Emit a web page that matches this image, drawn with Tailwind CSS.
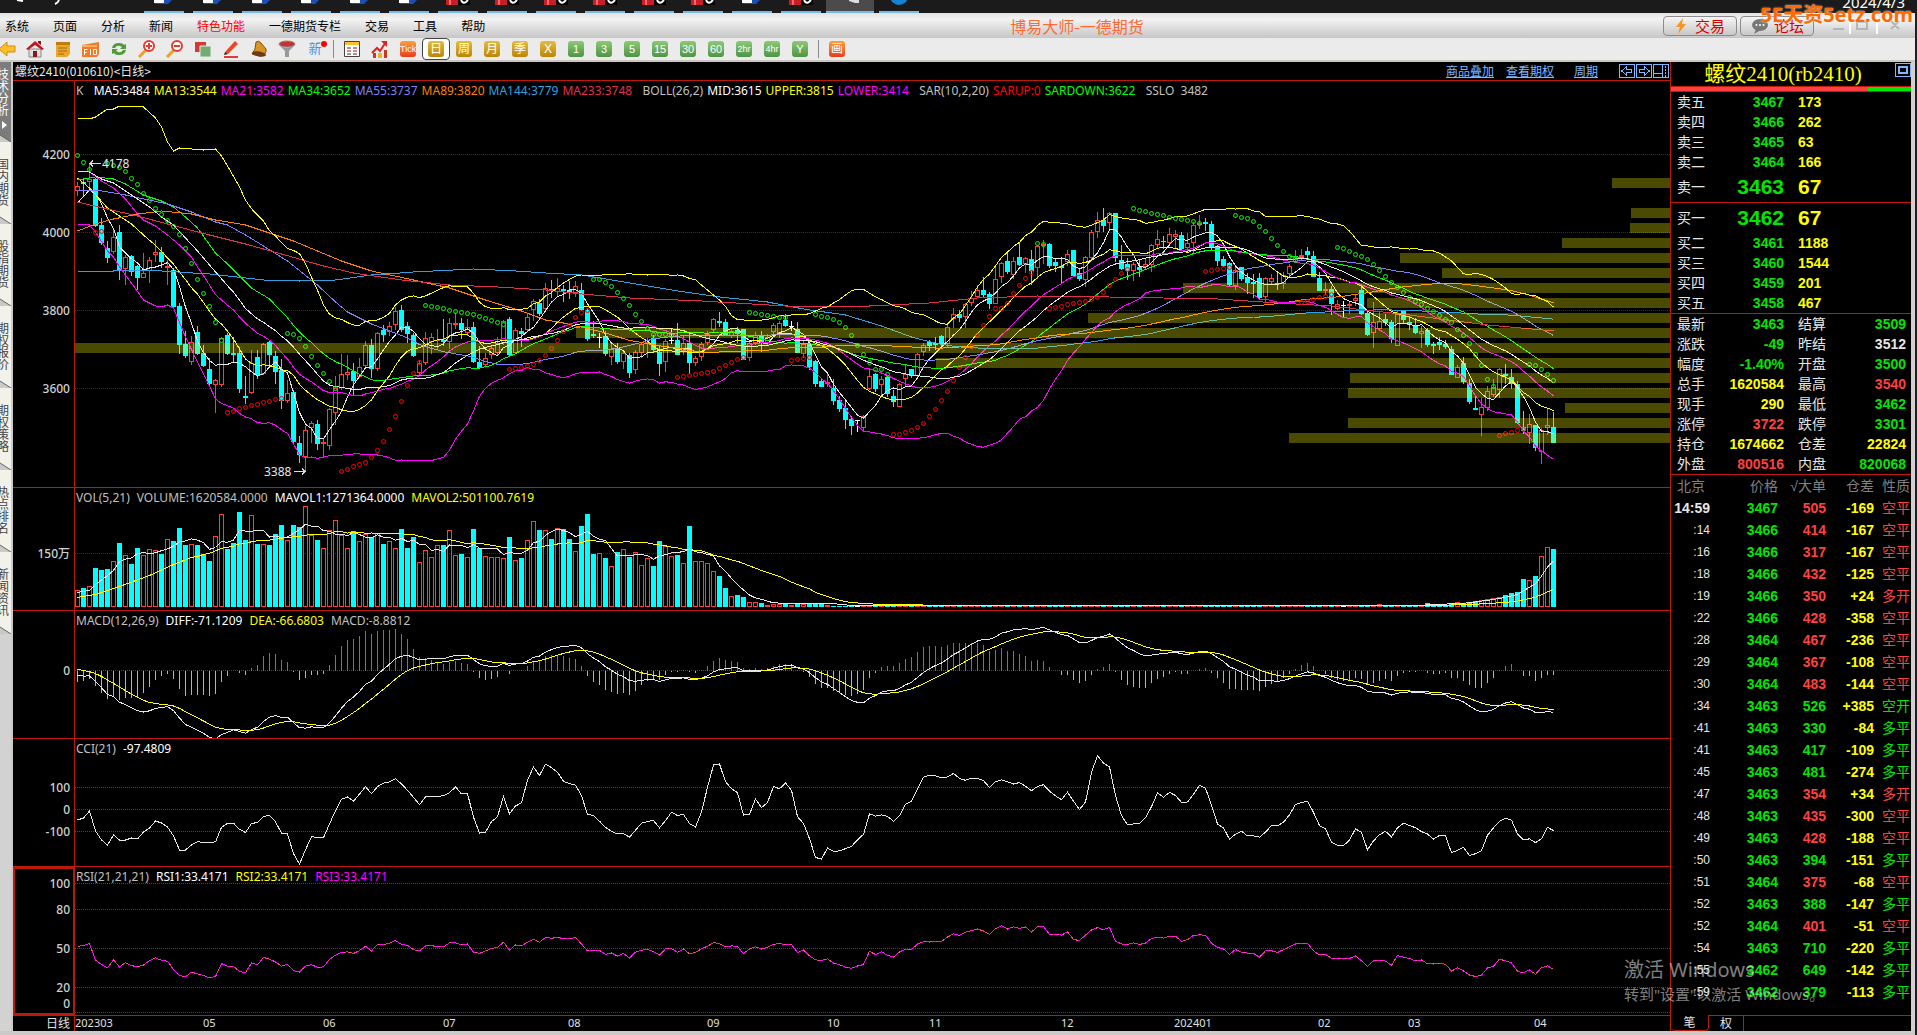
<!DOCTYPE html>
<html lang="zh-CN">
<head>
  <meta charset="UTF-8">
  <meta name="viewport" content="width=device-width, initial-scale=1.0">
  <title>博易大师-一德期货</title>
  <script src="https://cdn.jsdelivr.net/npm/@tailwindcss/browser@4"></script>
</head>
<body class="bg-black font-['Noto_Sans','Noto_Sans_CJK_SC',sans-serif] text-xs">
  <div class="relative flex min-h-screen flex-col overflow-hidden bg-[#cccac8]">

    <!-- system taskbar -->
    <div class="relative flex h-[13px] shrink-0 overflow-hidden bg-[#1b1b1b]">
      <svg class="h-[13px] w-[144px] shrink-0" fill="none" stroke="#fff" stroke-width="2"><path d="M17 0l6 1M59 0q-1 3-4 4"/></svg>
      <div id="tasks" class="flex gap-[9px]"></div>
      <div class="ml-[5px] h-[13px] w-12 border-b-2 border-[#76b9ed] bg-[#4b4b4b]"><svg class="h-3 w-12"><path d="M23 0h10v3h-4l-6-2z" fill="#ddd"/></svg></div>
      <div class="ml-[5px] h-[13px] w-10 border-b-2 border-[#76b9ed]"><svg class="h-3 w-10"><circle cx="20" cy="-4" r="9" fill="#1583d8"/></svg></div>
      <div class="ml-auto -mt-2 pr-3 text-[15px] leading-5 text-white">2024/4/3</div>
    </div>

    <!-- menu -->
    <header class="relative flex h-[25px] shrink-0 items-center bg-linear-to-b from-[#e2e2e2] via-[#f3f3f3] via-25% to-[#c6c6c6] pl-[5px] font-['Noto_Sans_CJK_SC',sans-serif]">
      <nav class="flex gap-6 leading-4 text-black">
        <button>系统</button><button>页面</button><button>分析</button><button>新闻</button><button class="text-[#ff0000]">特色功能</button><button>一德期货专栏</button><button>交易</button><button>工具</button><button>帮助</button>
      </nav>
      <h1 class="absolute inset-x-0 ml-[237px] text-center text-base leading-6 text-[#ff6a33]">博易大师-一德期货</h1>
      <div class="relative ml-auto flex gap-[3px] pr-2 text-[15px] leading-[18px] text-[#d80000]">
        <button class="flex h-5 w-[74px] items-center justify-center gap-2 rounded border border-[#8c8c8c] bg-linear-to-b from-[#f5f5f5] to-[#c8c8c8]">
          <svg class="h-4 w-3" viewBox="0 0 12 16"><path d="M8 0L1 9h4L3 16l8-10H7z" fill="#f5961e"/></svg>交易</button>
        <button class="flex h-5 w-[74px] items-center justify-center gap-1 rounded border border-[#8c8c8c] bg-linear-to-b from-[#f5f5f5] to-[#c8c8c8]">
          <svg class="h-4 w-5" viewBox="0 0 20 16"><ellipse cx="10" cy="7" rx="8" ry="6" fill="#777"/><path d="M6 11l-2 5 7-4z" fill="#777"/><g fill="#fff"><circle cx="6.500" cy="7" r="1"/><circle cx="10" cy="7" r="1"/><circle cx="13.500" cy="7" r="1"/></g></svg>论坛</button>
        <svg class="h-5 w-[92px]" fill="none" stroke="#b5b5b5" stroke-width="2"><path d="M16 13h11M40 6h10v7H40zM74 5l8 8m0-8l-8 8"/><path d="M33 0v18M60 0v18" stroke="#fff"/></svg>
      </div>
    </header>

    <!-- toolbar -->
    <div class="flex h-6 shrink-0 items-start border-b-2 border-[#cbc7c0] bg-[#ebebeb]">
      <div id="tools" class="-ml-[7px] flex items-center font-['Liberation_Sans','Noto_Sans_CJK_SC',sans-serif]"></div>
    </div>

    <main class="flex flex-1 pr-[2px]">
      <nav id="side" class="w-[11px] shrink-0 overflow-hidden bg-[#d2d2d2] font-['Noto_Sans_CJK_SC',sans-serif]"></nav>

      <section class="ml-[2px] flex min-w-0 flex-1 flex-col bg-black">
        <div class="flex h-[18px] items-center font-['Noto_Sans_CJK_SC',sans-serif] leading-4 text-[#e6e6e6]">
          <h2 class="pl-[2px]">螺纹2410(010610)&lt;日线&gt;</h2>
          <div class="ml-auto flex items-center text-[#7fb8ff] underline">
            <a href="#" class="mr-3">商品叠加</a><a href="#" class="mr-5">查看期权</a><a href="#" class="mr-5">周期</a>
            <svg class="h-4 w-[52px]" fill="none" stroke="#7fb8ff" shape-rendering="crispEdges"><path d="M1.500 1.500h15v13h-15zM18.500 1.500h15v13h-15zM35.500 1.500h15v13h-15zM36 10.500h8M44.500 2v12M47.500 3v2m0 1v2m0 1v2m0 1v2"/><path d="M3.500 8l5-4v2.500h5v3h-5V12zM31.500 8l-5-4v2.500h-5v3h5V12z"/></svg>
          </div>
        </div>
        <div id="panels"></div>
        <div class="flex h-4 border-t border-[#c01808] text-[#e0e0e0]">
          <div class="w-[62px] shrink-0 border-r border-[#c01808] pr-1 text-right leading-[15px]">日线</div>
          <svg id="months" class="h-[15px] min-w-0 flex-1 text-[11px]" fill="#e0e0e0"></svg>
        </div>
      </section>

      <aside class="flex w-[241px] shrink-0 flex-col border-l border-[#c01808] bg-black font-['Liberation_Sans','Noto_Sans_CJK_SC',sans-serif] text-sm text-[#e6e6e6]">
        <div class="relative h-6 pr-4 text-center font-['Liberation_Serif','Noto_Sans_CJK_SC',serif] text-[21px] leading-6 text-[#ffff00]">螺纹2410(rb2410)
          <svg class="absolute top-px right-0 h-[15px] w-4" fill="none" stroke="#7fb8ff" shape-rendering="crispEdges"><path d="M.5.5h15v13H.500z"/><path d="M4 4h8v6H4z" stroke-width="2"/></svg>
        </div>
        <div class="flex h-[6px] border-y border-[#c01808]"><div class="w-[197px] bg-[#ff4040]"></div><div class="flex-1 bg-[#00e600]"></div></div>
        <table class="w-full table-fixed"><tbody id="asks"></tbody></table>
        <table class="w-full table-fixed border-t border-[#c01808]"><tbody id="bids"></tbody></table>
        <table class="w-full table-fixed border-t border-[#c01808]"><tbody id="info"></tbody></table>
        <table class="w-full table-fixed border-t border-[#c01808]">
          <thead><tr class="h-[22px] leading-5 text-[#808080]">
            <th class="w-[43px] pl-[6px] text-left font-normal">北京</th><th class="w-[64px] text-right font-normal">价格</th><th class="w-12 text-right font-normal whitespace-nowrap">√大单</th><th class="w-12 text-right font-normal">仓差</th><th class="pl-2 text-left font-normal whitespace-nowrap">性质</th>
          </tr></thead>
          <tbody id="ticks"></tbody>
        </table>
        <div class="mt-auto flex h-4 text-xs leading-[14px]">
          <button class="w-[38px] rounded-b border-r border-b border-[#c01808]">笔</button>
          <button class="w-[35px] border-t border-r border-[#c01808]">权</button>
          <div class="flex-1 border-t border-[#c01808]"></div>
        </div>
      </aside>
      <div class="w-1 shrink-0 bg-[#d4cfcf]"></div>
    </main>
    <div class="h-1 shrink-0"></div>
    <div class="absolute top-[13px] right-0 bottom-0 w-[2px] bg-[#1b2024]"></div>

    <!-- overlays -->
    <div class="absolute top-[3px] right-1 text-xl leading-6 font-bold text-[#ff6a00] [text-shadow:0_0_2px_#fff]">5E天资5etz.com</div>
    <div class="pointer-events-none absolute right-[98px] bottom-[31px] w-[195px] whitespace-nowrap text-white/50">
      <div class="text-xl leading-7">激活 Windows</div>
      <div class="text-[15px] leading-5">转到"设置"以激活 Windows。</div>
    </div>
  </div>

  <script>
    const $ = (id) => document.getElementById(id);

    // ---- taskbar ----
    const docIcon = '<svg class="h-[11px] w-10"><path d="M10 0h12v3H10z" fill="#fff"/><path d="M20 0h8l-4 4H11V3h9z" fill="#1c4fb4"/></svg>';
    const redIcon = '<svg class="h-[11px] w-10"><path d="M8 0h14v5H8z" fill="#c81e28"/><path d="M11 0h2v5h-2z" fill="#f06a6a"/><path d="M20 0h12v5H20z" fill="#000"/><path d="M23 0q2 4 5 2l2-2" fill="none" stroke="#fff" stroke-width="2"/></svg>';
    $("tasks").innerHTML = [...'bbbbbbrrrrrrbr'].map((t) =>
      `<div class="h-[13px] w-10 border-b-2 border-[#76b9ed]">${t === 'b' ? docIcon : redIcon}</div>`).join('');

    // ---- toolbar ----
    const icon = (label, body) => `<button class="flex h-[22px] w-7 items-center justify-center" aria-label="${label}"><svg class="h-[18px] w-[18px]" viewBox="0 0 18 18">${body}</svg></button>`;
    const gold = (t, on) => `<button class="flex h-[22px] w-7 items-center justify-center ${on ? 'rounded border border-[#444] bg-white' : ''}"><span class="h-4 w-4 rounded-[3px] bg-linear-to-b from-[#e3bd3c] to-[#bd8500] text-center text-xs leading-4 text-white">${t}</span></button>`;
    const green = (t) => `<button class="flex h-[22px] w-7 items-center justify-center"><span class="h-4 w-4 rounded-[3px] bg-linear-to-b from-[#8dca76] to-[#4f9446] text-center leading-4 text-white ${t.length > 2 ? 'text-[9px]' : 'text-[11px]'}">${t}</span></button>`;
    const orange = (t) => `<button class="flex h-[22px] w-7 items-center justify-center"><span class="h-4 w-4 rounded-[3px] bg-linear-to-b from-[#ff9d3c] to-[#e8391c] text-center ${t.length > 1 ? 'text-[9px]' : 'text-xs'} leading-4 text-white">${t}</span></button>`;
    const sep = '<div class="mx-1 h-[18px] w-px bg-[#8a8a8a]"></div>';
    const lens = (p) => `<path d="M8 10L1 17" stroke="#f0a01e" stroke-width="3"/><circle cx="11" cy="6" r="5" fill="#fff" stroke="#e23c32" stroke-width="2"/><path d="${p}" stroke="#e23c32" stroke-width="2"/>`;
    $("tools").innerHTML = [
      icon('后退', '<path d="M1 9l8-7v4h8v6H9v4z" fill="#fcbf2c" stroke="#d18c0c"/>'),
      icon('主页', '<path d="M3 9h12v8H3z" fill="#dedede" stroke="#888"/><path d="M0 9l9-8 9 8-2 1-7-5-7 5z" fill="#c01820"/><path d="M12 1h3v4l-3-2zM7 11h4v6H7z" fill="#8a1a1a"/>'),
      icon('报表', '<path d="M2 2h13l1 2v10l-3 3H2z" fill="#eca72a"/><path d="M2 2h14v3H2z" fill="#c07a10"/><path d="M4 8h9M4 11h9M4 14h6" stroke="#a06a10"/>'),
      icon('F10', '<path d="M0 5l17-3v12l-2 3H0z" fill="#f27a2a"/><path d="M0 5h15v2H0z" fill="#fbb05e"/><path d="M2.500 9v6m0-5.500h3m-3 3h2M8.500 9v6m3-5.500h3v5h-3z" stroke="#fff" fill="none"/>'),
      icon('刷新', '<path d="M2 8q1-5 7-5 4 0 5 2l2-1v5h-6l2-2q-5-3-7 1zM16 10q-1 5-7 5-4 0-5-2l-2 1V9h6l-2 2q5 3 7-1z" fill="#4f9b35"/>'),
      icon('放大', lens('M8 6h6M11 3v6')), icon('缩小', lens('M8 6h6')),
      icon('叠加', '<path d="M1 2h11v10H1z" fill="#d23a36"/><path d="M6 6h11v11H6z" fill="#74aa74" stroke="#dfeedd"/>'),
      icon('画线', '<path d="M3 12L13 1l3 3-10 10z" fill="#e64a28"/><path d="M3 12l3 2-4 1z" fill="#222"/><path d="M2 17h14" stroke="#e23c32" stroke-width="2"/>'),
      icon('预警', '<path d="M6 2q3-2 5 1l5 6q1 6-6 7l-8-2q4-4 4-12z" fill="#d99224" stroke="#80500c"/><ellipse cx="9" cy="14" rx="7" ry="2.500" fill="#6a3a14" transform="rotate(10 9 14)"/>'),
      icon('筛选', '<ellipse cx="9" cy="4" rx="8" ry="3" fill="#cb3030" stroke="#888"/><path d="M1 5l6 6v6h4v-6l6-6q-8 5-16 0" fill="#999"/>'),
      '<button class="relative flex h-[22px] w-7 items-center justify-center text-[13px] text-[#4a90e2]">新<span class="absolute top-[3px] right-[2px] h-[6px] w-[6px] rounded-full bg-[#ff0000]"></span></button>',
      sep,
      icon('报价', '<path d="M1.500 1.500h15v15h-15z" fill="#fff" stroke="#444"/><path d="M2 2h14v3H2z" fill="#fbc02d"/><path d="M4 8h4m2 0h4M4 14h4m2 0h4" stroke="#333"/><path d="M4 11h4m2 0h4" stroke="#e00"/>'),
      icon('走势', '<path d="M1 13l5-5 3 3 6-9" fill="none" stroke="#e02020" stroke-width="2"/><path d="M10 1h6v6z" fill="#e02020"/><path d="M2 13h3v5H2zM13 10h3v8h-3z" fill="#c83a20"/><path d="M7 13h4v5H7z" fill="#e8b52a"/>'),
      orange('Tick'), gold('日', true), ...['周', '月', '季', 'X'].map((t) => gold(t)),
      ...['1', '3', '5', '15', '30', '60', '2hr', '4hr', 'Y'].map(green), sep, orange('画')
    ].join('');

    // ---- side tabs ----
    $("side").innerHTML = ['技术分析', '国内期货', '股指期货', '期权报价', '期权策略', '热点排名', '新闻资讯'].map((t, i) =>
      `<button class="relative flex w-[11px] items-start overflow-hidden ${i ? 'h-[82px] bg-[#f2f2ea] pt-4 text-[#444]' : 'h-20 bg-[#7c7c7c] pt-[6px] text-white'}"><span class="-ml-[3px] block w-3 shrink-0 text-xs leading-3 break-all">${t}</span>
        <svg class="absolute bottom-0 left-0 h-6 w-[11px]"><path d="M0 17l11 7H0z" fill="#c9c9c9"/><path d="M0 17l11 7" stroke="#666"/>${i ? '' : '<path d="M2 3l5 4-5 4z" fill="#fff"/>'}</svg></button>`).join('');

    // ---- bars: direction, high, body top, body bottom, low (pixels below the price panel's top) ----
    const bars = `u102,106,111,116 d99,102,104,117 u83,99,102,107 d98,99,146,147 d138,145,163,165 d161,168,178,183 u149,157,172,174 d145,152,190,200 u175,177,189,205 d175,176,192,196
      d185,186,198,210 u173,193,198,198 u177,180,191,203 u160,172,175,182 d167,172,182,188 u180,186,188,205 d188,190,227,228 d223,226,265,274 d251,264,276,278 u256,262,282,285
      d246,252,274,275 d265,273,286,287 d278,289,304,306 u299,300,305,333 u257,258,305,307 d253,255,274,275 d257,273,275,283 d267,273,309,313 d296,316,318,324 u270,283,313,314
      d270,277,295,299 u263,264,294,295 d260,262,275,285 d271,276,292,304 d279,290,321,329 u300,313,321,323 d310,312,362,363 d356,363,375,383 u346,350,377,392 u341,343,348,363
      d340,344,364,370 u358,362,364,378 u328,329,366,370 u296,308,333,345 u274,294,308,310 u275,292,295,300 d283,291,301,315 u278,287,297,298 u261,265,286,287 d259,265,289,298
      u252,253,289,291 d245,250,255,262 u242,246,252,256 u227,231,245,250 d225,230,250,252 d242,246,254,263 d253,255,276,277 u280,283,293,296 u252,258,283,285 u253,257,262,274
      u249,260,261,270 d239,260,262,266 u238,243,262,269 u233,243,245,249 d238,243,250,259 u239,247,253,256 d242,247,282,283 d266,282,288,289 u273,278,285,287 u265,268,275,279
      u257,263,273,276 u240,241,263,265 d237,239,275,277 u248,250,273,274 d248,251,254,267 u233,237,250,252 u219,221,230,241 d219,223,234,236 u203,208,229,231 d200,209,211,218
      u198,208,212,217 d205,209,211,222 d201,210,212,219 u201,206,213,217 d203,210,230,231 d228,230,259,261 d241,254,256,258 w253,257,257,268 d251,256,274,276 u263,269,277,285
      d263,269,282,284 u270,273,282,289 d273,275,293,298 u270,272,290,294 u262,264,273,278 u258,262,264,278 d255,258,270,273 d265,272,284,296 u259,261,282,292 w248,260,261,264
      d243,260,275,275 u255,263,271,275 d253,263,283,294 u276,278,283,286 u262,264,277,281 u251,254,263,265 u238,239,250,253 d232,241,243,247 d239,242,255,256 u249,251,256,258
      d247,250,253,263 d249,249,280,280 u262,263,278,281 u252,255,263,265 d251,255,263,272 u254,257,263,265 u243,245,252,254 u241,243,253,258 d234,240,246,247 w241,246,247,251
      d242,249,273,273 u260,264,274,278 d261,264,287,290 d280,281,304,307 d298,301,307,307 u292,302,304,307 d299,308,321,325 d316,320,329,332 d319,328,340,349 d336,339,346,355
      w340,340,341,352 u335,336,348,352 u288,296,309,310 d293,294,309,312 u296,299,305,316 d295,297,314,317 d310,316,322,327 u303,304,327,327 u284,294,299,307 d289,289,296,298
      u273,274,296,298 u263,265,272,276 d260,262,266,271 d257,263,265,270 d255,256,264,266 u243,247,264,268 u228,234,239,248 d230,234,238,242 u223,224,237,248 u211,218,223,226
      u205,210,217,218 d197,210,215,218 d212,214,224,229 u185,199,224,224 u182,183,197,203 d173,181,192,194 u177,181,195,199 d163,177,185,186 u177,178,184,193 d170,179,191,205
      u165,166,188,199 u160,164,166,184 d163,164,186,188 d178,182,186,192 d179,186,188,203 u170,174,182,186 d170,170,196,197 d188,193,199,201 u176,177,200,207 u150,152,178,180
      u132,140,152,158 d128,140,146,152 u132,133,143,150 d133,133,178,182 d165,180,189,190 d178,184,191,200 u182,184,191,201 d180,187,190,197 u178,184,187,190 u164,165,185,192
      u150,159,165,169 d156,161,162,169 u148,154,163,166 u150,154,157,169 d152,155,169,171 u153,163,168,172 u142,145,163,173 u135,143,145,149 d138,142,144,151 d141,144,167,170
      d165,166,181,186 d176,179,186,187 d182,183,205,207 u187,190,207,210 d187,187,199,201 d193,197,203,214 d194,202,204,218 d193,198,218,219 u197,198,217,223 u194,198,202,204
      d191,203,204,210 u192,195,204,209 u184,186,194,197 u170,177,180,181 u169,175,177,180 d167,171,175,180 d171,176,197,197 d192,198,211,211 u202,209,211,215 d206,209,224,235
      u220,224,229,230 w221,225,226,238 u222,224,226,234 u214,218,221,226 d205,210,234,235 d231,233,255,256 u222,242,253,268 u232,241,249,251 d234,239,243,246 d240,242,259,263
      u231,234,266,266 d231,231,240,244 d236,242,245,250 d238,245,253,254 u246,251,254,268 d248,250,265,267 d262,264,266,274 d257,262,265,270 d260,264,267,269 d266,269,295,295
      u285,287,298,298 d277,283,302,304 d299,303,322,324 d316,328,330,330 u318,327,335,356 u306,311,328,331 u299,307,315,317 u288,289,310,318 d284,294,296,304 d289,297,304,309
      d301,304,343,344 d331,347,351,354 u334,344,353,364 d345,345,368,371 u348,350,372,384 u329,345,348,355 d332,347,363,363`
      .trim().split(/\s+/).map((s) => {
        const [h, t, b, l] = s.slice(1).split(',').map(Number);
        return { dir: s[0], h, t, b, l, c: s[0] === 'd' ? b : t };
      });
    const N = bars.length;
    const closes = bars.map((b) => b.c);
    const X = (i) => 2.5 + 6 * i;

    // fills the gaps between [index, value] pairs
    function spread(pts) {
      const out = [];
      for (let k = 0; k < pts.length - 1; k++) {
        const [a, va] = pts[k], [b, vb] = pts[k + 1];
        for (let i = a; i < b; i++) out[i] = va + (vb - va) * (i - a) / (b - a);
      }
      const last = pts[pts.length - 1];
      out[last[0]] = last[1];
      return out;
    }
    // moving average; the head covers bars that lack enough history
    function ma(src, n, head) {
      const first = src.slice(0, n).reduce((a, b) => a + b, 0) / n;
      const start = spread([...head, [n - 1, first]]);
      return src.map((_, i) => i < n - 1 ? start[i] : src.slice(i - n + 1, i + 1).reduce((a, b) => a + b, 0) / n);
    }
    const line = (ys, color, extra = '') => `<polyline fill="none" stroke="${color}" ${extra} points="${ys.map((y, i) => X(i) + ',' + y.toFixed(1)).join(' ')}"/>`;
    const grid = (ys, color = '#c01414') => ys.map((y) => `<line x1="0" x2="100%" y1="${y}.5" y2="${y}.5" stroke="${color}" stroke-dasharray="1 1"/>`).join('');
    const hue = { u: '#ff3c3c', d: '#00ffff', w: '#ffffff' };

    // ---- price panel ----
    function pricePanel() {
      let s = grid([74, 152, 230, 308], '#a00000');
      bars.forEach((b, i) => {
        const x = X(i), c = hue[b.dir];
        if (b.dir === 'u' && b.b - b.t > 2)
          s += `<path d="M${x} ${b.h}V${b.t}M${x} ${b.b}V${b.l}M${x - 2} ${b.t + .5}h4V${b.b - .5}h-4z" fill="none" stroke="${c}"/>`;
        else
          s += `<path d="M${x} ${b.h}V${b.l}" stroke="${c}"/><rect x="${x - 2.5}" y="${b.t}" width="5" height="${Math.max(1, b.b - b.t)}" fill="${c}"/>`;
      });
      const mid = ma(closes, 26, [[0, 91], [2, 92], [4, 99], [6, 103], [8, 111], [10, 119], [12, 127], [14, 137], [16, 145], [18, 158], [20, 171], [22, 185]]);
      const dev = closes.map((_, i) => {
        if (i < 25) return 0;
        const w = closes.slice(i - 25, i + 1);
        return 2 * Math.sqrt(w.reduce((a, c) => a + (c - mid[i]) ** 2, 0) / 26);
      });
      const upHead = spread([[0, 38], [2, 39], [3, 37], [5, 29], [6, 29], [7, 26], [9, 26], [11, 27], [13, 38], [14, 47], [15, 62], [16, 71], [17, 68], [21, 70], [23, 69], [24, 76], [25, 85]]);
      const loHead = spread([[0, 144], [2, 145], [3, 152], [5, 171], [6, 177], [7, 187], [9, 203], [11, 220], [13, 226], [14, 227], [15, 225], [16, 228], [18, 257], [20, 282], [22, 306], [23, 319], [25, 328]]);
      s += line(ma(closes, 5, [[0, 123], [2, 110], [3, 114]]), '#e6e6e6');
      s += line(ma(closes, 13, [[0, 98], [2, 108], [5, 128], [7, 136], [9, 144], [11, 155]]), '#ffff00');
      s += line(ma(closes, 21, [[0, 91], [2, 92], [4, 101], [6, 108], [8, 119], [10, 134], [11, 140], [13, 146], [15, 155], [17, 165], [19, 177]]), '#ff00ff');
      s += line(ma(closes, 34, [[0, 100], [3, 97], [6, 99], [8, 104], [11, 115], [14, 121], [16, 127], [18, 137], [20, 148], [23, 173], [25, 184], [29, 208], [32, 219]]), '#00ff00');
      s += line(ma(closes, 55, [[0, 110], [3, 110], [8, 115], [15, 124], [19, 132], [23, 142], [25, 145], [28, 155], [31, 166], [35, 181], [40, 205], [43, 222], [45, 232], [49, 244]]), '#8080ff');
      s += line(ma(closes, 89, [[0, 151], [3, 144], [6, 139], [10, 134], [14, 131], [19, 134], [23, 140], [28, 145], [33, 155], [36, 161], [40, 171], [44, 181], [49, 191], [56, 200], [62, 208], [68, 220], [74, 231], [78, 240], [81, 243], [86, 250]]), '#ff8000');
      s += line(ma(closes, 144, [[0, 191], [6, 191], [10, 190], [14, 191], [22, 194], [31, 200], [37, 201], [43, 200], [49, 195], [56, 192], [66, 189], [73, 191], [78, 193], [84, 195], [89, 200], [99, 210], [107, 217], [115, 222], [121, 229], [128, 235], [134, 246], [139, 257]]), '#30a0e0');
      s += line(spread([[0, 122], [5, 129], [10, 136], [15, 144], [22, 155], [28, 164], [34, 174], [41, 186], [46, 193], [54, 200], [62, 205], [70, 207], [78, 210], [84, 214], [92, 218], [104, 221], [118, 226], [132, 226], [142, 223], [150, 218], [160, 216], [172, 217], [181, 218], [190, 219], [200, 223], [209, 226], [216, 231], [222, 235], [235, 245], [246, 251]]), '#e03050');
      s += line(mid, '#e6e6e6');
      s += line(mid.map((m, i) => i < 25 ? upHead[i] : m - dev[i]), '#ffff00');
      s += line(mid.map((m, i) => i < 25 ? loHead[i] : m + dev[i]), '#ff00ff');

      // parabolic SAR runs, one after the other: g above the bars, r below
      const sar = `g75,82,89 r152,151 g83,85,87,91,98,104,113,120,128,134,140,146,154,168,183,199,213,226,242,260 r332,331,328,327,325,324,322,321,319,318 g253,254,258,266,276,285,293,301,308
        r391,389,386,384,382,377,370,361,349,336,321,305,293,282 g225,226,227,228,230,231,232,233,234,236,238,240,242,244 r289,288,287,286,284,280,275,268,260,251,245,237,232,230
        g199,199,202,206,212,218,225,234,241,248,254,254,254,255 r297,296,295,294,293,292,291,288,285,282,279,277 g232,233,234,235,236,237,237 r280,279,278,277
        g234,236,237,239,242,247,255,265,274,282,289,289,294 r354,354,352,350,347,343,336,329,320,311,300,287,277,266,255,245,236,228,228,223,213,205,198,192 g163,164
        r228,227,226,224,223,222,221,219,217,212,205,199,193,189 g128,130,131,133,134,135,137,138,139,140,141,143 r191,190,189,188,187 g135,137,138,141,146,151,158,165,171,176,180
        r222,221,219,217,216,214 g167,168,171,174,176,179,184,190,196,202,207,212,217,221,224,228,231,235,239,242,249,255,263,274,285,299,306 r355,353,352,350,349 g284,285,289,294,300`;
      let n = 0;
      sar.trim().split(/\s+/).forEach((run) => run.slice(1).split(',').forEach((y) => {
        s += `<circle cx="${X(n++)}" cy="${+y + .5}" r="2" fill="none" stroke="${run[0] === 'g' ? '#00ff00' : '#ff0000'}" shape-rendering="auto"/>`;
      }));

      // volume at price, measured from the right edge: top, width
      s += '<svg x="100%" overflow="visible" fill="#ffff00" fill-opacity=".29">' +
        [[98, 58], [128, 39], [143, 40], [158, 108], [173, 270], [188, 228], [203, 487], [218, 303], [233, 582], [248, 1094], [278, 734], [293, 320], [308, 322], [323, 105], [338, 322], [353, 381]]
          .map(([y, w]) => `<rect x="${-w}" y="${y}" width="${w}" height="10"/>`).join('') + '</svg>';
      s += '<rect x="0" y="263" width="100%" height="10" fill="#ffff00" fill-opacity=".29"/>';
      s += '<g fill="none" stroke="#ddd"><path d="M15 83.500h11M18 80.500l-3 3 3 3M219 391.500h11M227 388.500l3 3-3 3"/></g><g fill="#e6e6e6"><text x="27" y="88">4178</text><text x="189" y="396">3388</text></g>';
      return s;
    }

    // ---- volume panel ----
    function volumePanel() {
      const head = [17, 19, 21, 39, 37, 38, 46, 64, 52, 43, 59, 52, 58, 57, 53, 68, 66, 79, 62, 63, 62, 53, 46, 71, 93, 58, 64, 95, 67, 92, 63, 63, 62, 73, 82, 67, 82, 80, 101, 72, 67, 59, 77, 87, 72, 59, 76, 66, 73, 70, 74, 63, 66, 59, 78, 59, 70, 45, 57, 50, 62, 62, 77, 52, 53, 50, 78, 59, 51, 50, 50, 49, 70, 47, 49, 67, 86, 77, 77, 68, 79, 78, 68, 56, 81, 93, 53, 54, 49, 41, 55, 58, 50, 55, 42, 49, 41, 66, 61, 51, 52, 44, 81, 46, 46, 44, 36, 31, 19, 11, 12, 10, 5, 5, 4, 2, 3, 3, 4, 2, 3, 3, 4, 4, 3, 2];
      const tail = [3, 1, 1, 1, 1, 1, 1, 1, 4, 3, 2, 2, 3, 5, 4, 5, 6, 7, 8, 9, 10, 12, 14, 15, 28, 27, 31, 51, 60, 58];
      const vol = [...head, ...Array(N - head.length - tail.length).fill(1), ...tail];
      let s = grid([66], '#a00000');
      vol.forEach((v, i) => {
        const x = X(i);
        s += bars[i].dir === 'd' || v < 2
          ? `<rect x="${x - 2.5}" y="${120 - v}" width="5" height="${v}" fill="${hue[bars[i].dir]}"/>`
          : `<rect x="${x - 2}" y="${120.5 - v}" width="4" height="${v - 1}" fill="none" stroke="#ff3c3c"/>`;
      });
      s += line(ma(vol, 5, [[0, 14], [2, 16], [3, 22]]).map((v) => 119.5 - v), '#e6e6e6');
      s += line(ma(vol, 21, [[0, 9], [3, 12], [7, 20], [12, 31], [16, 42], [19, 49]]).map((v) => 119.5 - v), '#ffff00');
      return s;
    }

    // ---- MACD panel ----
    function macdPanel() {
      let fast = 95, slow = 91.5, dea = -1.5;
      const k = 1.53, diffs = [], deas = [];
      let s = grid([60]);
      closes.forEach((c, i) => {
        if (i) { fast += (c - fast) * 2 / 13; slow += (c - slow) * 2 / 27; }
        const diff = fast - slow;
        dea += (diff - dea) * 2 / 10;
        const y = Math.round(60 + 2 * (diff - dea) * k);
        s += `<path d="M${X(i)} 60.5V${y}" stroke="${y > 60 ? '#00ffff' : '#ff3c3c'}"/>`;
        diffs.push(60 + diff * k);
        deas.push(60 + dea * k);
      });
      return s + line(diffs, '#e6e6e6') + line(deas, '#ffff00');
    }

    // ---- CCI panel ----
    function cciPanel() {
      const head = [82, 80, 73, 93, 102, 107, 97, 102, 102, 100, 101, 94, 90, 83, 85, 89, 98, 112, 112, 107];
      const tp = bars.map((b) => (b.h + b.l + b.c) / 3);
      const ys = tp.map((t, i) => {
        if (i < 20) return head[i];
        const w = tp.slice(i - 20, i + 1), m = w.reduce((a, b) => a + b, 0) / 21;
        const md = w.reduce((a, b) => a + Math.abs(b - m), 0) / 21;
        return 71 + (t - m) / (0.015 * md) * 0.22;
      });
      return grid([49, 71, 93]) + line(ys, '#e6e6e6');
    }

    // ---- RSI panel ----
    function rsiPanel() {
      let up = 4.1, all = 8;
      const ys = closes.map((c, i) => {
        if (i) {
          const d = closes[i - 1] - c;
          up += (Math.max(d, 0) - up) / 21;
          all += (Math.abs(d) - all) / 21;
        }
        return 82 + (50 - 100 * up / all) * 1.3;
      });
      return grid([17, 43, 82, 121, 146]) + line(ys, '#ff00ff') + line(ys, '#ff5070', 'stroke-dasharray="2 4"');
    }

    const panels = [
      { h: 'h-[407px]', gap: 'gap-1', draw: pricePanel, ticks: [[74, '4200'], [152, '4000'], [230, '3800'], [308, '3600']],
        legend: [['#c0c0c0', 'K '], ['#fff', ' MA5:3484'], ['#ff0', 'MA13:3544'], ['#f0f', 'MA21:3582'], ['#0f0', 'MA34:3652'], ['#8080ff', 'MA55:3737'], ['#ff8000', 'MA89:3820'], ['#30a0e0', 'MA144:3779'], ['#e03050', 'MA233:3748'], ['#c0c0c0', '  BOLL(26,2)'], ['#fff', 'MID:3615'], ['#ff0', 'UPPER:3815'], ['#f0f', 'LOWER:3414'], ['#c0c0c0', '  SAR(10,2,20)'], ['#f00', 'SARUP:0'], ['#0f0', 'SARDOWN:3622'], ['#c0c0c0', '  SSLO  3482']] },
      { h: 'h-[123px]', gap: 'gap-[7px]', draw: volumePanel, ticks: [[66, '150万']],
        legend: [['#c0c0c0', 'VOL(5,21)'], ['#c0c0c0', 'VOLUME:1620584.0000'], ['#fff', 'MAVOL1:1271364.0000'], ['#ff0', 'MAVOL2:501100.7619']] },
      { h: 'h-32', gap: 'gap-[7px]', draw: macdPanel, ticks: [[60, '0']],
        legend: [['#c0c0c0', 'MACD(12,26,9)'], ['#fff', 'DIFF:-71.1209'], ['#ff0', 'DEA:-66.6803'], ['#c0c0c0', 'MACD:-8.8812']] },
      { h: 'h-32', gap: 'gap-[7px]', draw: cciPanel, ticks: [[49, '100'], [71, '0'], [93, '-100']],
        legend: [['#c0c0c0', 'CCI(21)'], ['#fff', '-97.4809']] },
      { h: 'h-[149px]', gap: 'gap-[7px]', draw: rsiPanel, ticks: [[17, '100'], [43, '80'], [82, '50'], [121, '20'], [137, '0']], active: true,
        legend: [['#c0c0c0', 'RSI(21,21,21)'], ['#fff', 'RSI1:33.4171'], ['#ff0', 'RSI2:33.4171'], ['#f0f', 'RSI3:33.4171']] }
    ];
    $("panels").innerHTML = panels.map((p) => `
      <div class="relative flex ${p.h} overflow-hidden border-t border-[#c01808]">
        <svg class="h-full w-[62px] shrink-0 ${p.active ? 'border-2' : 'border-r'} border-[#c01808] text-xs font-medium" fill="#d0d0d0">${p.ticks.map(([y, t]) => `<text x="${p.active ? 55 : 57}" y="${y + (p.active ? 2 : 4)}" text-anchor="end">${t}</text>`).join('')}</svg>
        <svg class="h-full min-w-0 flex-1 text-xs" shape-rendering="crispEdges"><g transform="translate(0 -1)">${p.draw()}</g></svg>
        <div class="absolute top-px left-[63px] flex ${p.gap} leading-[18px] whitespace-pre">${p.legend.map(([c, t]) => `<span style="color:${c}">${t}</span>`).join('')}</div>
      </div>`).join('');

    $("months").innerHTML = [[0, '202303'], [128, '05'], [248, '06'], [368, '07'], [493, '08'], [632, '09'], [752, '10'], [854, '11'], [986, '12'], [1099, '202401'], [1243, '02'], [1333, '03'], [1459, '04']]
      .map(([x, t]) => `<text x="${x}" y="11">${t}</text>`).join('');

    // ---- order book ----
    const book = (rows, big) => rows.map(([n, p, q]) => `
      <tr class="${n === big ? 'h-[30px]' : 'h-5 leading-5'}"><th class="w-[43px] pl-[6px] text-left font-normal">${n}</th>
        <td class="w-[70px] text-right font-bold text-[#00e600] ${n === big ? 'text-[21px] leading-[30px]' : ''}">${p}</td>
        <td class="pl-[14px] font-bold text-[#ffff00] ${n === big ? 'text-[21px] leading-[30px]' : ''}">${q}</td></tr>`).join('');
    $("asks").innerHTML = book([['卖五', 3467, 173], ['卖四', 3466, 262], ['卖三', 3465, 63], ['卖二', 3464, 166], ['卖一', 3463, 67]], '卖一');
    $("bids").innerHTML = book([['买一', 3462, 67], ['买二', 3461, 1188], ['买三', 3460, 1544], ['买四', 3459, 201], ['买五', 3458, 467]], '买一');

    const tone = { g: 'text-[#00e600]', r: 'text-[#ff4040]', y: 'text-[#ffff00]', w: 'text-[#e6e6e6]' };
    $("info").innerHTML = [
      ['最新', 'g', '3463', '结算', 'g', '3509'], ['涨跌', 'g', '-49', '昨结', 'w', '3512'],
      ['幅度', 'g', '-1.40%', '开盘', 'g', '3500'], ['总手', 'y', '1620584', '最高', 'r', '3540'],
      ['现手', 'y', '290', '最低', 'g', '3462'], ['涨停', 'r', '3722', '跌停', 'g', '3301'],
      ['持仓', 'y', '1674662', '仓差', 'y', '22824'], ['外盘', 'r', '800516', '内盘', 'g', '820068']
    ].map(([a, ca, va, b, cb, vb]) => `
      <tr class="h-5 leading-5"><th class="w-[43px] pl-[6px] text-left font-normal">${a}</th><td class="w-[70px] text-right font-bold ${tone[ca]}">${va}</td>
        <th class="w-[52px] pl-[14px] text-left font-normal">${b}</th><td class="pr-[5px] text-right font-bold ${tone[cb]}">${vb}</td></tr>`).join('');

    $("ticks").innerHTML = `14:59 3467 505 -169 空平 r r|:14 3466 414 -167 空平 r r|:16 3466 317 -167 空平 r r|:18 3466 432 -125 空平 r r|:19 3466 350 +24 多开 r r|:22 3466 428 -358 空平 r r|:28 3464 467 -236 空平 r r|:29 3464 367 -108 空平 r r|:30 3464 483 -144 空平 r r|:34 3463 526 +385 空开 g g|:41 3463 330 -84 多平 g g|:41 3463 417 -109 多平 g g|:45 3463 481 -274 多平 g g|:47 3463 354 +34 多开 r r|:48 3463 435 -300 空平 r r|:49 3463 428 -188 空平 r r|:50 3463 394 -151 多平 g g|:51 3464 375 -68 空平 r r|:52 3463 388 -147 多平 g g|:52 3464 401 -51 空平 r r|:54 3463 710 -220 多平 g g|:55 3462 649 -142 多平 g g|:59 3462 379 -113 多平 g g`
      .split('|').map((r) => {
        const [t, p, v, d, k, cv, ck] = r.split(' ');
        return `<tr class="h-[22px] leading-[22px] font-bold"><td class="pr-1 text-right ${t[0] === ':' ? 'text-xs leading-[22px] font-normal' : ''}">${t}</td><td class="text-right text-[#00e600]">${p}</td>
          <td class="text-right ${tone[cv]}">${v}</td><td class="text-right text-[#ffff00]">${d}</td><td class="pl-2 font-normal whitespace-nowrap ${tone[ck]}">${k}</td></tr>`;
      }).join('');
  </script>
</body>
</html>
